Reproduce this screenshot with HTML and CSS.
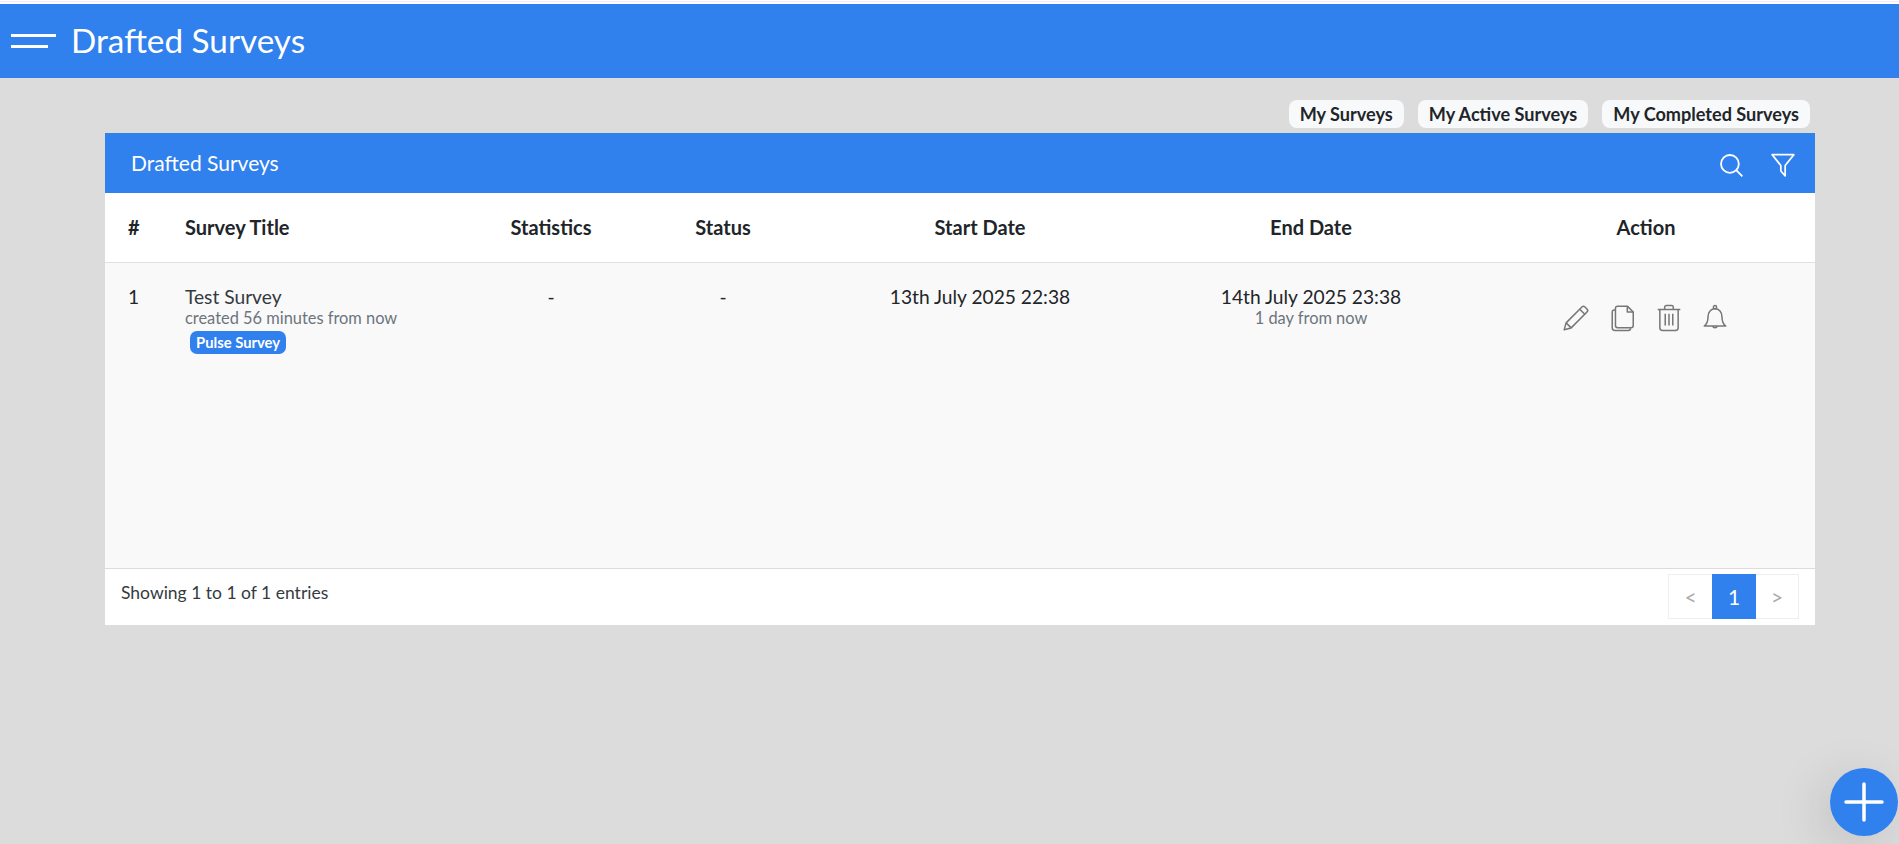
FILE: index.html
```html
<!DOCTYPE html>
<html lang="en">
<head>
  <meta charset="UTF-8" />
  <title>Drafted Surveys</title>
  <link rel="stylesheet" href="styles.css">
</head>
<body>
  <div class="top-strip"></div>
  <header class="app-bar">
    <div class="menu-icon"><span></span><span></span></div>
    <h1>Drafted Surveys</h1>
  </header>

  <main class="content">
    <div class="tabs">
      <a class="tab">My Surveys</a>
      <a class="tab">My Active Surveys</a>
      <a class="tab">My Completed Surveys</a>
    </div>

    <section class="card">
      <div class="card-head">
        <h2>Drafted Surveys</h2>
        <div class="card-tools">
          <svg width="26" height="26" viewBox="0 0 24 24" fill="none" stroke="#fff" stroke-width="1.7"><circle cx="11" cy="11" r="8.2"/><path d="M17 17l5.500 5.500"/></svg>
          <svg width="26" height="26" viewBox="0 0 24 24" fill="none" stroke="#fff" stroke-width="1.6" stroke-linejoin="round"><path d="M2 2.500h20l-8 10v9.500l-4-4.500v-5z"/></svg>
        </div>
      </div>

      <table class="survey-table">
        <colgroup>
          <col class="c-num"><col class="c-title"><col class="c-stats"><col class="c-status"><col class="c-start"><col class="c-end"><col class="c-action">
        </colgroup>
        <thead>
          <tr>
            <th class="left">#</th>
            <th class="left">Survey Title</th>
            <th>Statistics</th>
            <th>Status</th>
            <th>Start Date</th>
            <th>End Date</th>
            <th>Action</th>
          </tr>
        </thead>
        <tbody>
          <tr>
            <td class="left">1</td>
            <td class="left">
              <div class="title">Test Survey</div>
              <div class="sub">created 56 minutes from now</div>
              <span class="badge">Pulse Survey</span>
            </td>
            <td>-</td>
            <td>-</td>
            <td>13th July 2025 22:38</td>
            <td>
              <div>14th July 2025 23:38</div>
              <div class="sub">1 day from now</div>
            </td>
            <td>
              <div class="actions">
                <svg width="28" height="28" viewBox="0 0 26 26" fill="none" stroke="#777" stroke-width="1.4" stroke-linejoin="round"><path d="M2 24l1.800-6.500L18.500 2.800a2 2 0 0 1 2.800 0l1.900 1.900a2 2 0 0 1 0 2.800L8.500 22.200z"/><path d="M16.500 4.800l4.700 4.700M3.800 17.500l4.700 4.700"/></svg>
                <svg width="26" height="28" viewBox="0 0 24 26" fill="none" stroke="#777" stroke-width="1.4" stroke-linejoin="round"><path d="M7 2h9l5.500 5.500V20a2 2 0 0 1-2 2H7a2 2 0 0 1-2-2V4a2 2 0 0 1 2-2z"/><path d="M16 2v5.500h5.500"/><path d="M5 5.500H4a2 2 0 0 0-2 2V22a2.500 2.500 0 0 0 2.500 2.500H17a2 2 0 0 0 2-2"/></svg>
                <svg width="26" height="28" viewBox="0 0 24 26" fill="none" stroke="#777" stroke-width="1.4" stroke-linejoin="round"><path d="M1.500 5h21M8 5V3a1.500 1.500 0 0 1 1.500-1.500h5A1.500 1.500 0 0 1 16 3v2"/><path d="M3.500 5v17a2.500 2.500 0 0 0 2.500 2.500h12a2.500 2.500 0 0 0 2.500-2.500V5"/><path d="M8.500 9v11M12 9v11M15.500 9v11"/></svg>
                <svg width="26" height="28" viewBox="0 0 24 26" fill="none" stroke="#777" stroke-width="1.4" stroke-linejoin="round"><path d="M2 20.500c2.500-2 3.500-4 3.500-8.500 0-4.500 2.800-7.500 6.500-7.500s6.500 3 6.500 7.500c0 4.500 1 6.500 3.500 8.500z"/><circle cx="12" cy="3" r="1.500"/><path d="M9.800 20.500a2.300 2.300 0 0 0 4.400 0"/></svg>
              </div>
            </td>
          </tr>
        </tbody>
      </table>

      <div class="card-foot">
        <span class="entries">Showing 1 to 1 of 1 entries</span>
        <div class="pager">
          <a class="page-btn muted">&lt;</a>
          <a class="page-btn current">1</a>
          <a class="page-btn muted next">&gt;</a>
        </div>
      </div>
    </section>
  </main>

  <button class="fab">
    <svg width="40" height="40" viewBox="0 0 40 40" stroke="#fff" stroke-width="3.500" stroke-linecap="round"><path d="M20 2v36M2 20h36"/></svg>
  </button>
</body>
</html>
```

FILE: styles.css
```css
* {
  box-sizing: border-box;
}

html, body {
  height: 100%;
}

body {
  margin: 0;
  background-color: #dcdcdc;
  font-family: 'Lato', sans-serif;
  color: #212529;
  overflow: hidden;
}

.top-strip {
  height: 4px;
  background-color: #fff;
  border-top: 1px solid #fff;
  border-bottom: 1px solid #fff;
  box-shadow: inset 0 1px 0 #f3e9fb;
}

.app-bar {
  height: 74px;
  background-color: #3080ee;
  display: flex;
  align-items: center;
  color: #fff;
  padding-left: 11px;
}

.app-bar h1 {
  margin: -2px 0 0 15px;
  font-size: 33.300px;
  font-weight: 400;
}

.menu-icon {
  width: 45px;
}

.menu-icon span {
  display: block;
  height: 3px;
  background-color: #fff;
}

.menu-icon span + span {
  width: 37px;
  margin-top: 8px;
}

.content {
  padding: 22px 84px 0 105px;
}

.tabs {
  display: flex;
  justify-content: flex-end;
  gap: 14px;
  padding-right: 5px;
  margin-bottom: 5px;
}

.tab {
  height: 28px;
  line-height: 28px;
  padding: 0 11px;
  background-color: #f8f9fa;
  border-radius: 8px;
  font-size: 18.100px;
  font-weight: 700;
}

.card {
  background-color: #fff;
}

.card-head {
  height: 60px;
  background-color: #3080ee;
  color: #fff;
  display: flex;
  align-items: center;
  justify-content: space-between;
  padding: 0 19px 0 26px;
}

.card-head h2 {
  margin: -2px 0 0 0;
  font-size: 21px;
  font-weight: 400;
}

.card-tools {
  display: flex;
  gap: 26px;
  padding-top: 4px;
}

.survey-table {
  width: 100%;
  border-collapse: collapse;
  table-layout: fixed;
  font-size: 19.200px;
}

.c-num { width: 79px; }
.c-title { width: 287px; }
.c-stats { width: 160px; }
.c-status { width: 184px; }
.c-start { width: 330px; }
.c-end { width: 332px; }
.c-action { width: 338px; }

.survey-table th {
  height: 69px;
  font-size: 20px;
  font-weight: 700;
  text-align: center;
  border-bottom: 1px solid #dee2e6;
}

.survey-table td {
  height: 306px;
  padding-top: 23px;
  vertical-align: top;
  text-align: center;
  background-color: #f9f9f9;
  line-height: 22px;
  border-bottom: 1px solid #dcdcdc;
}

.survey-table .left {
  text-align: left;
}

.survey-table th:first-child,
.survey-table td:first-child {
  padding-left: 23px;
}

.title {
  color: #343a40;
}

.sub {
  font-size: 16.400px;
  line-height: 19px;
  color: #6c757d;
}

.badge {
  display: inline-block;
  margin: 4px 0 0 5px;
  padding: 0 6px;
  background-color: #3080ee;
  color: #fff;
  border-radius: 7px;
  font-size: 14.800px;
  font-weight: 700;
  line-height: 23px;
}

.actions {
  display: flex;
  justify-content: center;
  align-items: center;
  gap: 20px;
  margin: 18px 0 0 -3px;
}

.card-foot {
  height: 56px;
  display: flex;
  justify-content: space-between;
  align-items: flex-start;
  padding: 5px 16px 0 16px;
}

.entries {
  margin-top: 8px;
  font-size: 17.500px;
  color: #343a40;
}

.pager {
  display: flex;
  height: 45px;
  border: 1px solid #eee;
}

.page-btn {
  width: 43px;
  display: flex;
  align-items: center;
  justify-content: center;
  font-size: 21px;
}

.page-btn.next {
  width: 42px;
}

.page-btn.muted {
  color: #aaa;
}

.page-btn.current {
  width: 44px;
  margin: -1px 0;
  background-color: #3080ee;
  color: #fff;
}

.fab {
  position: fixed;
  right: 1px;
  bottom: 8px;
  width: 68px;
  height: 68px;
  border: 0;
  padding: 0;
  border-radius: 50%;
  background-color: #3080ee;
  box-shadow: -10px 10px 50px rgba(0, 0, 0, 0.12);
  display: flex;
  align-items: center;
  justify-content: center;
}
```
